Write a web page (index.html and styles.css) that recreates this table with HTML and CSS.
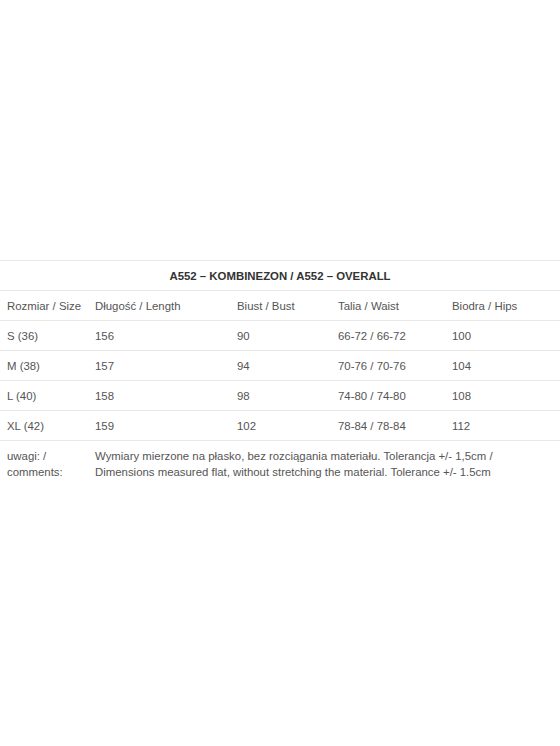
FILE: index.html
```html
<!DOCTYPE html>
<html lang="pl">
<head>
<meta charset="utf-8">
<title>A552 – KOMBINEZON / A552 – OVERALL</title>
<link rel="stylesheet" href="styles.css">
</head>
<body>
<div class="page">
  <table class="sizes">
    <colgroup>
      <col class="c1"><col class="c2"><col class="c3"><col class="c4"><col class="c5">
    </colgroup>
    <tr class="title-row"><td colspan="5" class="title">A552 – KOMBINEZON / A552 – OVERALL</td></tr>
    <tr><td>Rozmiar / Size</td><td>Długość / Length</td><td>Biust / Bust</td><td>Talia / Waist</td><td>Biodra / Hips</td></tr>
    <tr><td>S (36)</td><td>156</td><td>90</td><td>66-72 / 66-72</td><td>100</td></tr>
    <tr><td>M (38)</td><td>157</td><td>94</td><td>70-76 / 70-76</td><td>104</td></tr>
    <tr><td>L (40)</td><td>158</td><td>98</td><td>74-80 / 74-80</td><td>108</td></tr>
    <tr><td>XL (42)</td><td>159</td><td>102</td><td>78-84 / 78-84</td><td>112</td></tr>
    <tr class="notes"><td>uwagi: / comments:</td><td colspan="4">Wymiary mierzone na płasko, bez rozciągania materiału. Tolerancja +/- 1,5cm / Dimensions measured flat, without stretching the material. Tolerance +/- 1.5cm</td></tr>
  </table>
</div>
</body>
</html>
```
FILE: styles.css
```css
html, body {
  margin: 0;
  padding: 0;
  background: #fff;
}
.page {
  padding-top: 260px;
  font-family: "Liberation Sans", Arial, sans-serif;
}
.sizes {
  width: 560px;
  border-collapse: collapse;
  table-layout: fixed;
  font-size: 11.4px;
  color: #555;
}
.c1 { width: 88px; }
.c2 { width: 142px; }
.c3 { width: 101px; }
.c4 { width: 114px; }
.c5 { width: 115px; }
.sizes td {
  border-top: 1px solid #e8e8e8;
  padding: 0 7px;
  height: 29px;
  vertical-align: middle;
  line-height: 16px;
  white-space: nowrap;
}
.sizes .title {
  text-align: center;
  font-weight: bold;
  font-size: 11.4px;
  color: #333;
}
.sizes .notes td {
  white-space: normal;
  vertical-align: top;
  padding-top: 7px;
  padding-bottom: 8px;
  height: auto;
}
```
